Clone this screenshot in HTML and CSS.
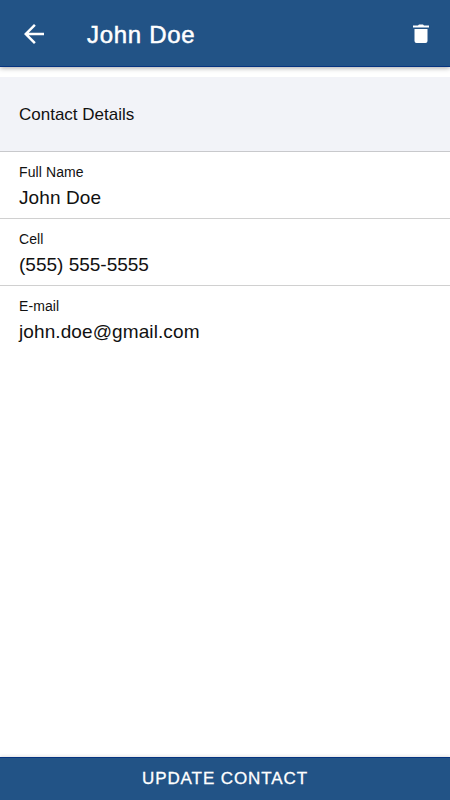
FILE: index.html
```html
<!doctype html>
<html lang="en">

<head>
	<meta charset="utf-8">
	<title>John Doe</title>
	<link rel="stylesheet" href="styles.css">
</head>

<body>
	<!-- Top bar -->
	<header class="toolbar">
		<button class="btn-icon" aria-label="Back">
			<svg class="icon-back" viewBox="4 4 16 16"><path d="M20 11H7.83l5.59-5.59L12 4l-8 8 8 8 1.41-1.41L7.83 13H20v-2z"/></svg>
		</button>
		<h1 class="title">John Doe</h1>
		<button class="btn-icon" aria-label="Delete">
			<svg class="icon-delete" viewBox="0 0 16 19"><path d="M5 1.500L6 .5h4l1 1h5v2H0v-2zM1.500 5h13v12a2 2 0 0 1-2 2h-9a2 2 0 0 1-2-2z"/></svg>
		</button>
	</header>

	<!-- Contact fields -->
	<main class="content">
		<h2 class="section-title">Contact Details</h2>
		<div class="field">
			<div class="field-label">Full Name</div>
			<div class="field-value">John Doe</div>
		</div>
		<div class="field">
			<div class="field-label">Cell</div>
			<div class="field-value field-phone">(555) 555-5555</div>
		</div>
		<div class="field">
			<div class="field-label">E-mail</div>
			<div class="field-value">john.doe@gmail.com</div>
		</div>
	</main>

	<button class="btn-update">UPDATE CONTACT</button>
</body>

</html>
```
FILE: styles.css
```css
* { margin: 0; padding: 0; box-sizing: border-box; }
body { height: 100vh; display: flex; flex-direction: column; background-color: #fff; color: #111; font-family: "Liberation Sans", Arial, sans-serif; overflow: hidden; }
button { border: none; background: none; color: #fff; font-family: inherit; }
.toolbar { flex: none; height: 67px; display: flex; align-items: center; padding: 0 21px 0 24px; background-color: #225386; border-bottom: 1px solid #063480; color: #fff; box-shadow: 0 1px 5px rgba(0, 0, 0, 0.35); }
.btn-icon { display: flex; padding-top: 1px; }
.btn-icon svg { display: block; fill: #fff; }
.icon-back { width: 20px; height: 20px; }
.icon-delete { width: 16px; height: 19px; }
.title { flex: 1; margin-left: 43px; font-size: 24px; line-height: 28px; font-weight: normal; letter-spacing: 0.7px; -webkit-text-stroke: 0.5px #fff; padding-top: 3px; }
.content { flex: 1; padding-top: 10px; }
.section-title { height: 75px; padding: 0 19px; background-color: #f2f3f8; border-bottom: 1px solid #c8c9cc; font-size: 17px; line-height: 75px; font-weight: normal; }
.field { height: 67px; padding: 11px 19px 0; border-bottom: 1px solid #d0d0d0; }
.field:last-child { border-bottom: none; }
.field-label { font-size: 14px; line-height: 18px; letter-spacing: 0.1px; }
.field-value { margin-top: 5px; font-size: 19px; line-height: 24px; letter-spacing: 0.1px; }
.field-phone { letter-spacing: 0; }
.btn-update { flex: none; height: 43px; background-color: #225386; border-top: 1px solid #063480; box-shadow: 0 -1px 3px rgba(0, 0, 0, 0.12); font-size: 17px; letter-spacing: 0.9px; -webkit-text-stroke: 0.3px #fff; }
```
